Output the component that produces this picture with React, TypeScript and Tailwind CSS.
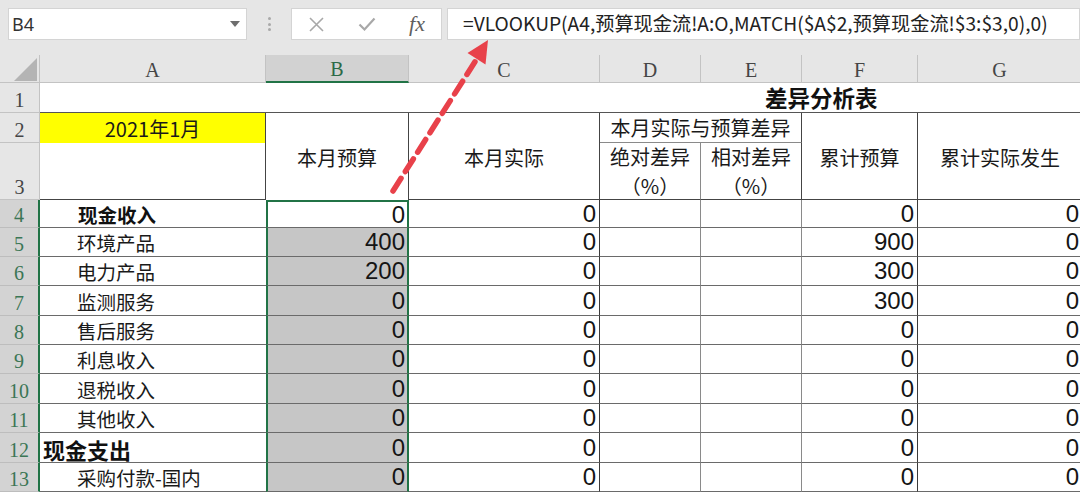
import React from "react";

type Row = {
  n: number;
  label: string;
  kind: "bold" | "big" | "plain";
  b: string;
  f: string;
  h: string;
};

const ROWS: Row[] = [
  { n: 4, label: "现金收入", kind: "bold", b: "0", f: "0", h: "h-[28px]" },
  { n: 5, label: "环境产品", kind: "plain", b: "400", f: "900", h: "h-[29px]" },
  { n: 6, label: "电力产品", kind: "plain", b: "200", f: "300", h: "h-[29px]" },
  { n: 7, label: "监测服务", kind: "plain", b: "0", f: "300", h: "h-[30px]" },
  { n: 8, label: "售后服务", kind: "plain", b: "0", f: "0", h: "h-[29px]" },
  { n: 9, label: "利息收入", kind: "plain", b: "0", f: "0", h: "h-[29px]" },
  { n: 10, label: "退税收入", kind: "plain", b: "0", f: "0", h: "h-[30px]" },
  { n: 11, label: "其他收入", kind: "plain", b: "0", f: "0", h: "h-[29px]" },
  { n: 12, label: "现金支出", kind: "big", b: "0", f: "0", h: "h-[30px]" },
  { n: 13, label: "采购付款-国内", kind: "plain", b: "0", f: "0", h: "h-[29px]" },
];

const COLS = ["A", "B", "C", "D", "E", "F", "G"];

function FormulaBar() {
  return (
    <div className="flex h-[55px] items-start bg-[#e6e6e6] pt-2">
      {/* 名称框 */}
      <div className="ml-2 flex h-8 w-[239px] items-center justify-between border border-[#d4d4d4] bg-white pl-[3px] pr-[6px]">
        <span className="font-['Noto_Sans',sans-serif] text-[18px] leading-none text-[#333]">B4</span>
        <svg width="10" height="6" viewBox="0 0 10 6">
          <path d="M0 0h10L5 6z" fill="#6e6e6e" />
        </svg>
      </div>
      <div className="flex h-8 w-[44px] flex-col items-center justify-center gap-[2.5px]">
        <span className="h-[3px] w-[3px] rounded-full bg-[#a9a9a9]" />
        <span className="h-[3px] w-[3px] rounded-full bg-[#a9a9a9]" />
        <span className="h-[3px] w-[3px] rounded-full bg-[#a9a9a9]" />
      </div>
      {/* 取消 / 确认 / fx */}
      <div className="flex h-8 w-[151px] items-center border border-[#d4d4d4] bg-white">
        <div className="flex w-[49px] justify-center">
          <svg width="17" height="17" viewBox="0 0 17 17">
            <path d="M2 2L15 15M15 2L2 15" stroke="#a8a8a8" strokeWidth="1.6" fill="none" />
          </svg>
        </div>
        <div className="flex w-[52px] justify-center">
          <svg width="18" height="16" viewBox="0 0 18 16">
            <path d="M1.5 8.5L6.5 13.5L16.5 2.5" stroke="#a8a8a8" strokeWidth="2.2" fill="none" />
          </svg>
        </div>
        <div className="flex w-[48px] justify-center">
          <span className="font-['Liberation_Serif',serif] text-[22px] italic leading-none text-[#5f5f5f]">fx</span>
        </div>
      </div>
      <div className="ml-[5px] flex h-8 flex-1 items-center border border-[#d4d4d4] bg-white pl-[15px]">
        <span className="whitespace-nowrap font-['Noto_Sans_CJK_SC',sans-serif] text-[19.2px] leading-none text-[#222]">
          =VLOOKUP(A4,预算现金流!A:O,MATCH($A$2,预算现金流!$3:$3,0),0)
        </span>
      </div>
    </div>
  );
}

function HeaderBlock() {
  const hdr = "flex items-center justify-center font-['Noto_Sans_CJK_SC',sans-serif] text-[20px] leading-[29px] text-[#1a1a1a]";
  const rowNo =
    "flex items-end justify-center border-b border-r border-[#c3c3c3] bg-[#e6e6e6] pb-[2px] font-['Liberation_Serif',serif] text-[20px] leading-none text-[#454545]";
  return (
    <div className="grid grid-cols-[40px_226px_143px_191px_101px_101px_116px_164px] grid-rows-[28px_30px_30px_57px]">
      {/* 列标 */}
      <div className="col-start-1 row-start-1 border-b border-r border-[#c3c3c3] bg-[#e6e6e6]">
        <svg width="40" height="28" viewBox="0 0 40 28">
          <path d="M37 3V26H14z" fill="#b4b4b4" />
        </svg>
      </div>
      {COLS.map((c) =>
        c === "B" ? (
          <div
            key={c}
            className="row-start-1 flex items-center justify-center border-b-2 border-r border-b-[#217346] border-r-[#c3c3c3] bg-[#d2d2d2] pt-[2px] font-['Liberation_Serif',serif] text-[20px] text-[#2b6a47]"
          >
            {c}
          </div>
        ) : (
          <div
            key={c}
            className="row-start-1 flex items-center justify-center border-b border-r border-[#c3c3c3] bg-[#e6e6e6] pt-[2px] font-['Liberation_Serif',serif] text-[20px] text-[#454545]"
          >
            {c}
          </div>
        )
      )}

      {/* 第1行 */}
      <div className={`col-start-1 row-start-2 ${rowNo}`}>1</div>
      <div className="col-span-7 col-start-2 row-start-2 flex items-center border-b border-[#555] pl-[725px] font-['Noto_Sans_CJK_SC',sans-serif] text-[22.5px] font-bold leading-none text-[#111]">
        差异分析表
      </div>

      {/* 第2-3行 */}
      <div className={`col-start-1 row-start-3 ${rowNo}`}>2</div>
      <div className={`col-start-1 row-start-4 ${rowNo}`}>3</div>
      <div className={`col-start-2 row-start-3 border-r border-[#444] bg-[#ffff00] ${hdr}`}>2021年1月</div>
      <div className="col-start-2 row-start-4 border-b border-r border-[#444]" />
      <div className={`col-start-3 row-span-2 row-start-3 border-r border-[#444] pt-[2px] ${hdr}`}>本月预算</div>
      <div className={`col-start-4 row-span-2 row-start-3 border-b border-r border-[#444] pt-[2px] ${hdr}`}>本月实际</div>
      <div className={`col-span-2 col-start-5 row-start-3 border-b border-r border-b-[#8a8a8a] border-r-[#444] ${hdr}`}>
        本月实际与预算差异
      </div>
      <div className={`col-start-5 row-start-4 flex-col border-b border-r border-b-[#444] border-r-[#8a8a8a] ${hdr}`}>
        <span>绝对差异</span>
        <span>（%）</span>
      </div>
      <div className={`col-start-6 row-start-4 flex-col border-b border-r border-[#444] ${hdr}`}>
        <span>相对差异</span>
        <span>（%）</span>
      </div>
      <div className={`col-start-7 row-span-2 row-start-3 border-b border-r border-[#444] pt-[2px] ${hdr}`}>累计预算</div>
      <div className={`col-start-8 row-span-2 row-start-3 border-b border-[#444] pt-[2px] ${hdr}`}>累计实际发生</div>
    </div>
  );
}

function DataRow({ row, first }: { row: Row; first: boolean }) {
  const num = "flex items-center justify-end border-b border-[#6a6a6a] font-['Liberation_Sans',sans-serif] text-[24px] leading-none text-[#151515]";
  return (
    <div className={`grid grid-cols-[40px_226px_143px_191px_101px_101px_116px_164px] ${row.h}`}>
      <div className="flex items-end justify-center border-b border-r-2 border-b-[#bdbdbd] border-r-[#217346] bg-[#d3d3d3] pb-[2px] font-['Liberation_Serif',serif] text-[20px] leading-none text-[#3b7655]">
        {row.n}
      </div>
      {row.kind === "big" ? (
        <div className="flex items-center border-b border-[#6a6a6a] pl-[3px] pt-[2px] font-['Noto_Sans_CJK_SC',sans-serif] text-[22px] font-bold leading-none text-[#111]">
          {row.label}
        </div>
      ) : row.kind === "bold" ? (
        <div className="flex items-center border-b border-[#6a6a6a] pl-[38px] pt-[2px] font-['Noto_Sans_CJK_SC',sans-serif] text-[19.5px] font-bold leading-none text-[#111]">
          {row.label}
        </div>
      ) : (
        <div className="flex items-center border-b border-[#6a6a6a] pl-[37px] pt-[2px] font-['Noto_Sans_CJK_SC',sans-serif] text-[19.5px] leading-none text-[#1a1a1a]">
          {row.label}
        </div>
      )}
      {first ? (
        <div className={`${num} border-x-2 border-t-2 border-x-[#217346] border-t-[#217346] bg-white pr-[2px]`}>{row.b}</div>
      ) : (
        <div className={`${num} border-x-2 border-x-[#217346] bg-[#c6c6c6] pr-[2px]`}>{row.b}</div>
      )}
      <div className={`${num} border-r border-r-[#3a3a3a] pr-[3px]`}>0</div>
      <div className="border-b border-r border-b-[#6a6a6a] border-r-[#8a8a8a]" />
      <div className="border-b border-r border-b-[#6a6a6a] border-r-[#8a8a8a]" />
      <div className={`${num} border-r border-r-[#3a3a3a] pr-[3px]`}>{row.f}</div>
      <div className={`${num} pr-[3px]`}>0</div>
    </div>
  );
}

function Arrow() {
  return (
    <svg className="pointer-events-none absolute inset-0" width="1080" height="492" viewBox="0 0 1080 492">
      <line
        x1="393"
        y1="191"
        x2="478"
        y2="57"
        stroke="#e8414a"
        strokeWidth="5.5"
        strokeDasharray="15 8"
        strokeLinecap="round"
      />
      <path d="M488 40L485.5 64.5L467.5 53z" fill="#e8414a" />
    </svg>
  );
}

export default function App() {
  return (
    <div className="relative h-[492px] w-[1080px] overflow-hidden bg-white">
      <FormulaBar />
      <HeaderBlock />
      {ROWS.map((r, i) => (
        <DataRow key={r.n} row={r} first={i === 0} />
      ))}
      <Arrow />
    </div>
  );
}
